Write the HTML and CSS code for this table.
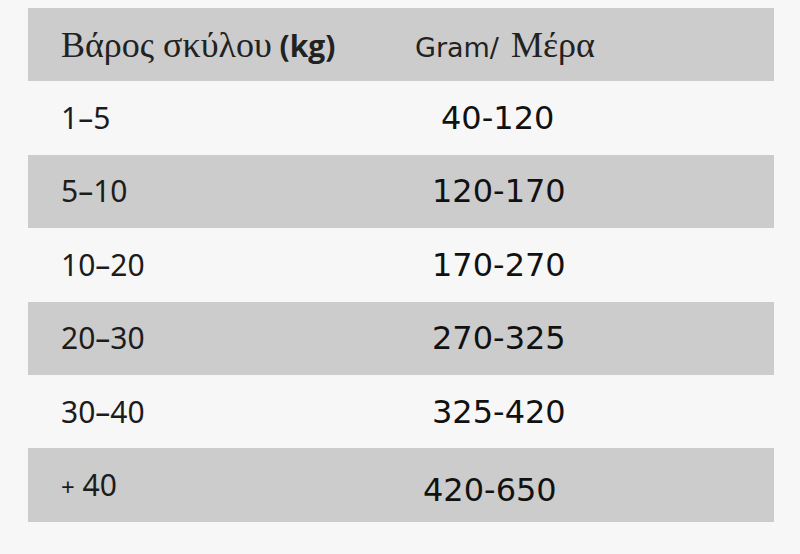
FILE: index.html
```html
<!DOCTYPE html>
<html lang="el">
<head>
<meta charset="utf-8">
<title>Βάρος σκύλου</title>
<link rel="stylesheet" href="styles.css">
</head>
<body>
<div class="table">
  <div class="row shade head">
    <div class="cell left"><span class="serif">Βάρος σκύλου</span> <b class="kg">(kg)</b></div>
    <div class="cell right"><span class="gram">Gram/</span><span class="serif mera">Μέρα</span></div>
  </div>
  <div class="row">
    <div class="cell left">1–5</div>
    <div class="cell right num shift-r">40-120</div>
  </div>
  <div class="row shade">
    <div class="cell left">5–10</div>
    <div class="cell right num">120-170</div>
  </div>
  <div class="row">
    <div class="cell left">10–20</div>
    <div class="cell right num">170-270</div>
  </div>
  <div class="row shade">
    <div class="cell left">20–30</div>
    <div class="cell right num">270-325</div>
  </div>
  <div class="row">
    <div class="cell left">30–40</div>
    <div class="cell right num">325-420</div>
  </div>
  <div class="row shade">
    <div class="cell left plus"><span class="p">+</span> 40</div>
    <div class="cell right num shift-l low">420-650</div>
  </div>
</div>
</body>
</html>
```

FILE: styles.css
```css
html, body {
  margin: 0;
  padding: 0;
  background: #f7f7f7;
}
body {
  width: 800px;
  height: 554px;
  padding-top: 8px;
  box-sizing: border-box;
  font-family: "Noto Sans", "Open Sans", sans-serif;
}
.table {
  margin-left: 28px;
  width: 746px;
  display: flex;
  flex-direction: column;
}
.row {
  display: grid;
  grid-template-columns: 404px 1fr;
  height: 73.4px;
  align-items: center;
}
.shade {
  background: #cccccc;
}
.cell {
  white-space: nowrap;
}
.left {
  padding-left: 33px;
  font-size: 30px;
  color: #1c1c1c;
  line-height: 1;
}
.right {
  padding-left: 0;
}
.num {
  font-family: "DejaVu Sans", sans-serif;
  font-size: 32px;
  color: #111;
  line-height: 1;
}
.shift-r { padding-left: 9px; }
.shift-l { margin-left: -9px; }
.low { padding-top: 9px; }
.serif {
  font-family: "Liberation Serif", serif;
  font-size: 36px;
  color: #222;
}
.kg {
  font-family: "Open Sans", "Noto Sans", sans-serif;
  font-weight: 700;
  font-size: 30px;
  color: #222;
}
.head .right {
  margin-left: -17px;
}
.gram {
  font-family: "DejaVu Sans", sans-serif;
  font-size: 27px;
  color: #222;
}
.head .right .mera {
  font-size: 36px;
  margin-left: 12px;
}
.plus .p {
  font-size: 24px;
}
```
